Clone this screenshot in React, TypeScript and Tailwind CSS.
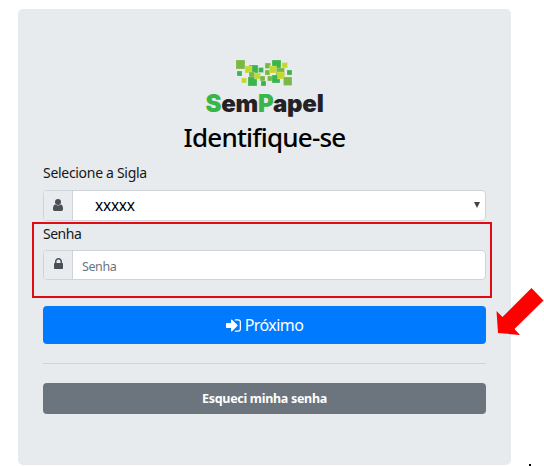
import React from "react";

const squares: [number, number, number, string][] = [
  [0, 0, 9, "#79b842"],
  [13, 5, 9, "#39b54a"],
  [1, 11, 5, "#39b54a"],
  [9, 6, 7, "#c4d92e"],
  [13, 12, 6, "#79b842"],
  [22.5, 7.5, 5, "#39b54a"],
  [29, 3, 5.5, "#79b842"],
  [29, 10, 5, "#79b842"],
  [36, 0, 9, "#39b54a"],
  [46, 2.5, 5.5, "#c4d92e"],
  [40, 8, 8.5, "#79b842"],
  [33.5, 6, 7, "#c4d92e"],
  [51, 10, 5, "#39b54a"],
  [5.5, 18, 5, "#c4d92e"],
  [12, 17, 9, "#39b54a"],
  [18.5, 13, 6, "#c4d92e"],
  [24, 16, 5, "#79b842"],
  [25, 21, 5, "#39b54a"],
  [31.5, 16, 5, "#79b842"],
  [36, 15, 8, "#39b54a"],
  [41.5, 12, 7, "#c4d92e"],
  [47.5, 17, 8.5, "#79b842"],
];

function Logo() {
  return (
    <div className="flex h-[63px] flex-col items-center">
      <svg width="57" height="26" viewBox="0 0 57 26">
        {squares.map(([x, y, s, fill], i) => (
          <rect key={i} x={x} y={y} width={s} height={s} fill={fill} stroke="#e8ebee" strokeWidth="0.25" />
        ))}
      </svg>
      <div className="mt-[3px] whitespace-nowrap font-['Inter',sans-serif] text-[24px] leading-[30px] font-black tracking-[-0.2px] text-[#242126]">
        <span className="text-[#39b54a]">S</span>em<span className="text-[#39b54a]">P</span>apel
      </div>
    </div>
  );
}

function UserIcon() {
  return (
    <svg width="10" height="12" viewBox="0 128 1280 1536" fill="#495057">
      <circle cx="640" cy="512" r="384" />
      <path d="M1280 1399q0 109-62.5 187t-150.5 78H213q-88 0-150.5-78T0 1399q0-85 8.5-160.5t31.500-152t58.500-131t94-89t134.500-34.500q131 128 313 128t313-128q76 0 134.500 34.500t94 89t58.500 131t31.500 152t8.500 160.500z" />
    </svg>
  );
}

function LockIcon() {
  return (
    <svg width="9" height="11" viewBox="0 128 1152 1408" fill="#495057">
      <path d="M320 768h512V576q0-106-75-181t-181-75-181 75-75 181v192zm832 96v576q0 40-28 68t-68 28H96q-40 0-68-28t-28-68V864q0-40 28-68t68-28h32V576q0-184 132-316t316-132 316 132 132 316v192h32q40 0 68 28t28 68z" />
    </svg>
  );
}

function SignInIcon() {
  return (
    <svg width="15" height="13" viewBox="0 256 1536 1280">
      <path fill="white" d="M1184 896q0 26-19 45l-544 544q-19 19-45 19t-45-19-19-45v-288H64q-26 0-45-19t-19-45V704q0-26 19-45t45-19h448V352q0-26 19-45t45-19 45 19l544 544q19 19 19 45z" />
      <path fill="none" stroke="white" strokeWidth="128" strokeLinecap="round" d="M960 320h288q93 0 158.500 65.500T1472 544v704q0 93-65.500 158.500T1248 1472H960" />
    </svg>
  );
}

export default function App() {
  return (
    <div className="relative h-[466px] w-[544px] overflow-hidden bg-white pt-[9px] pl-[18px] font-['Noto_Sans','Open_Sans',sans-serif] text-[#151719]">
      <main className="flex h-[456px] w-[493px] flex-col rounded-[5px] bg-[#e8ebee] px-[25px] pt-[51px]">
        <Logo />
        <h1 className="h-[37px] text-center text-[26px] leading-[29px] font-medium whitespace-nowrap text-black">
          <span className="inline-block tracking-[-0.8px]">Identifique-se</span>
        </h1>
        <label className="h-[30px] text-[14px] leading-[26px] tracking-[-0.3px]">Selecione a Sigla</label>
        <div className="flex h-[31px] shrink-0 overflow-hidden rounded-[4px] border border-[#ced4da] bg-white">
          <span className="flex w-[29px] items-center justify-center border-r border-[#ced4da] bg-[#e9ecef] pb-px">
            <UserIcon />
          </span>
          <span className="flex-1 pl-[22px] text-[15.500px] leading-[29px] tracking-[-0.25px] text-black">xxxxx</span>
          <svg className="mt-[11px] mr-[5px]" width="6" height="6" viewBox="0 0 6 6">
            <path d="M0 0H6L3 6Z" fill="#40444a" />
          </svg>
        </div>
        <label className="h-[29px] shrink-0 text-[14px] leading-[25px] tracking-[-0.5px]">Senha</label>
        <div className="flex h-[30px] shrink-0 overflow-hidden rounded-[4px] border border-[#ced4da] bg-white">
          <span className="flex w-[29px] items-center justify-center border-r border-[#ced4da] bg-[#e9ecef] pb-[3px]">
            <LockIcon />
          </span>
          <span className="pl-[9px] text-[12.5px] leading-[31px] tracking-[-0.4px] text-[#6c757d]">Senha</span>
        </div>
        <button className="mt-[26px] flex h-[38px] shrink-0 items-center justify-center gap-[4px] rounded-[4px] bg-[#007bff] text-[16px] tracking-[-0.55px] text-white">
          <SignInIcon />
          <span>Próximo</span>
        </button>
        <hr className="mt-[19px] border-t border-[#cfd4d8]" />
        <button className="mt-[19px] h-[31px] shrink-0 rounded-[4px] bg-[#6c757d] pt-px text-[12.5px] font-bold tracking-[-0.3px] text-white">
          Esqueci minha senha
        </button>
      </main>
      <div className="absolute top-[222px] left-[32px] h-[76px] w-[460px] border-2 border-[#e30b13]" />
      <svg className="absolute top-[286px] left-[494px]" width="50" height="52" viewBox="494 286 50 52">
        <path d="M531.500 288L543.500 300.500L514.500 329L520 335L498 333L496.500 311L502.500 317Z" fill="#ff0000" />
      </svg>
      <div className="absolute top-[464px] left-[529px] h-[2px] w-[2px] bg-black" />
    </div>
  );
}
